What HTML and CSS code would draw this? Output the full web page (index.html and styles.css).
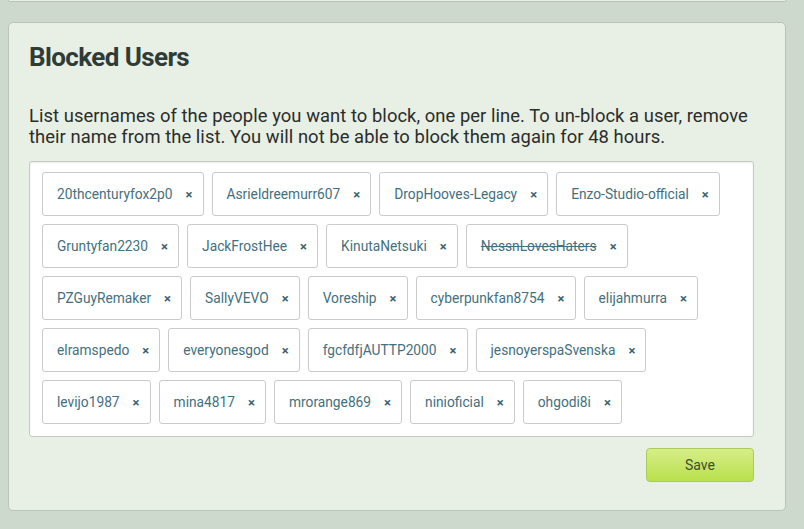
FILE: index.html
```html
<!DOCTYPE html>
<html>
<head>
<meta charset="utf-8">
<link rel="stylesheet" href="styles.css">
</head>
<body>
<div class="page">
  <div class="prev-card"></div>
  <section class="card">
    <h1 class="title">Blocked Users</h1>
    <p class="desc">List usernames of the people you want to block, one per line. To un-block a user, remove their name from the list. You will not be able to block them again for 48 hours.</p>
    <div class="tagbox">
      <span class="tag"><span class="name">20thcenturyfox2p0</span><span class="x">×</span></span>
      <span class="tag"><span class="name">Asrieldreemurr607</span><span class="x">×</span></span>
      <span class="tag"><span class="name">DropHooves-Legacy</span><span class="x">×</span></span>
      <span class="tag"><span class="name">Enzo-Studio-official</span><span class="x">×</span></span>
      <span class="tag"><span class="name">Gruntyfan2230</span><span class="x">×</span></span>
      <span class="tag"><span class="name">JackFrostHee</span><span class="x">×</span></span>
      <span class="tag"><span class="name">KinutaNetsuki</span><span class="x">×</span></span>
      <span class="tag"><span class="name struck">NessnLovesHaters</span><span class="x">×</span></span>
      <span class="tag"><span class="name">PZGuyRemaker</span><span class="x">×</span></span>
      <span class="tag"><span class="name">SallyVEVO</span><span class="x">×</span></span>
      <span class="tag"><span class="name">Voreship</span><span class="x">×</span></span>
      <span class="tag"><span class="name">cyberpunkfan8754</span><span class="x">×</span></span>
      <span class="tag"><span class="name">elijahmurra</span><span class="x">×</span></span>
      <span class="tag"><span class="name">elramspedo</span><span class="x">×</span></span>
      <span class="tag"><span class="name">everyonesgod</span><span class="x">×</span></span>
      <span class="tag"><span class="name">fgcfdfjAUTTP2000</span><span class="x">×</span></span>
      <span class="tag"><span class="name">jesnoyerspaSvenska</span><span class="x">×</span></span>
      <span class="tag"><span class="name">levijo1987</span><span class="x">×</span></span>
      <span class="tag"><span class="name">mina4817</span><span class="x">×</span></span>
      <span class="tag"><span class="name">mrorange869</span><span class="x">×</span></span>
      <span class="tag"><span class="name">ninioficial</span><span class="x">×</span></span>
      <span class="tag"><span class="name">ohgodi8i</span><span class="x">×</span></span>
    </div>
    <div class="actions">
      <button class="save">Save</button>
    </div>
  </section>
</div>
</body>
</html>
```
FILE: styles.css
```css
html, body {
  margin: 0;
  padding: 0;
  background: #cdd9cc;
  font-family: Roboto, "Liberation Sans", sans-serif;
}
.page {
  width: 778px;
  margin-left: 8px;
  display: flex;
  flex-direction: column;
}
.prev-card {
  height: 1px;
  background: #e8efe4;
  border: 1px solid #b7c3b5;
  border-top: none;
  border-radius: 0 0 5px 5px;
  margin-bottom: 20px;
}
.card {
  background: #e8efe4;
  border: 1px solid #b9c5b7;
  border-radius: 5px;
  padding: 17px 31px 28px 20px;
  height: 489px;
  box-sizing: border-box;
}
.title {
  margin: 0;
  font-size: 26px;
  font-weight: 700;
  letter-spacing: -0.6px;
  color: #2f3b37;
  line-height: 34px;
}
.desc {
  margin: 31px -14px 14px 0;
  font-size: 18.4px;
  letter-spacing: 0.05px;
  line-height: 21px;
  color: #2a2d2b;
}
.tagbox {
  background: #fff;
  border: 1px solid #c4c9c2;
  border-radius: 3px;
  box-shadow: inset 0 1px 2px rgba(0,0,0,0.08);
  padding: 10px 12px 12px 12px;
  display: flex;
  flex-wrap: wrap;
  gap: 8px 8px;
}
.tag {
  display: inline-flex;
  align-items: center;
  height: 44px;
  box-sizing: border-box;
  border: 1px solid #c9cccb;
  border-radius: 3px;
  padding: 0 10px 0 14px;
  font-size: 13.75px;
  color: #44707e;
}
.struck {
  text-decoration: line-through;
}
.x {
  margin-left: 13px;
  font-size: 13px;
  font-weight: 700;
  color: #3a6170;
  width: 7px;
}
.actions {
  display: flex;
  justify-content: flex-end;
  margin-top: 11px;
}
.save {
  width: 108px;
  height: 34px;
  border: 1px solid #aacb5a;
  border-radius: 4px;
  background: linear-gradient(#d6ee88, #b9e04c);
  font-family: Roboto, "Liberation Sans", sans-serif;
  font-size: 14px;
  color: #3f4d30;
  padding: 0;
}
```
